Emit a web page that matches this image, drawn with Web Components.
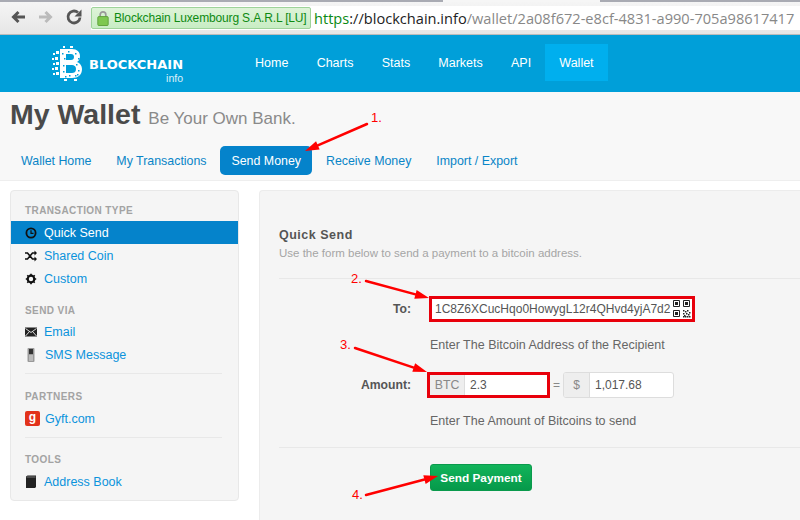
<!DOCTYPE html>
<html>
<head>
<meta charset="utf-8">
<title>My Wallet</title>
<style>
  html, body { margin: 0; padding: 0; }
  body { width: 800px; height: 520px; overflow: hidden; background: #fff; font-family: "Liberation Sans", Arial, sans-serif; position: relative; }
</style>
</head>
<body>
<browser-bar></browser-bar>
<site-nav></site-nav>
<wallet-header></wallet-header>
<wallet-body>
  <wallet-sidebar slot="side"></wallet-sidebar>
  <quick-send slot="main"></quick-send>
</wallet-body>
<arrow-notes></arrow-notes>

<script>
class BrowserBar extends HTMLElement {
  constructor() {
    super();
    this.attachShadow({ mode: 'open' });
    this.shadowRoot.innerHTML = `
      <style>
        :host { display: flex; align-items: flex-start; height: 35px; box-sizing: border-box; padding: 6px 0 0 8px; border-bottom: 1px solid #bbb;
          background: linear-gradient(90deg, #a9abb3 443px, #f6f6f6 443px, #f6f6f6 600px, #a9abb3 600px) 0 0 / 100% 2px no-repeat, linear-gradient(#f6f6f6, #e6e6e6); }
        .btn { width: 20px; height: 20px; margin: 1px 8px 0 0; flex: none; }
        .url { flex: 1; display: flex; align-items: center; height: 24px; margin-left: -1px; background: #fff; overflow: hidden; white-space: nowrap; }
        .ev { display: flex; align-items: center; height: 22px; flex: none; width: 220px; box-sizing: border-box; padding-left: 5px; background: linear-gradient(#def3d8, #c8edc4); border: 1px solid #9ed39a; border-radius: 2px; color: #0e8a12; font: 12px "Liberation Sans", sans-serif; letter-spacing: -.15px; }
        .ev svg { margin-right: 5px; flex: none; }
        .addr { font: 14.600px "Open Sans", sans-serif; color: #222; margin-left: 3px; }
        .addr b { font-weight: normal; color: #0b8a12; }
        .addr i { font-style: normal; color: #888; }
      </style>
      <svg class="btn" viewBox="0 0 20 20"><path d="M17 10H6M10.5 5 5.500 10l5 5" fill="none" stroke="#555" stroke-width="3"/></svg>
      <svg class="btn" viewBox="0 0 20 20"><path d="M3 10h11M9.500 5l5 5-5 5" fill="none" stroke="#bbb" stroke-width="3"/></svg>
      <svg class="btn" viewBox="0 0 20 20"><path d="M16 10.500a6 6 0 1 1-2-5" fill="none" stroke="#555" stroke-width="2.800"/><path d="M17.500 2.500v7h-7z" fill="#555"/></svg>
      <div class="url">
        <span class="ev">
          <svg width="12" height="16" viewBox="0 0 12 17"><path d="M3 8V5a3 3 0 0 1 6 0v3" fill="none" stroke="#999" stroke-width="1.800"/><rect x=".5" y="7" width="11" height="9.500" rx="1" fill="#7ec850" stroke="#5ea03a"/></svg>
          Blockchain Luxembourg S.A.R.L [LU]
        </span>
        <span class="addr"><b>https</b>://blockchain.info<i>/wallet/2a08f672-e8cf-4831-a990-705a98617417</i></span>
      </div>
    `;
  }
}

class SiteNav extends HTMLElement {
  constructor() {
    super();
    this.attachShadow({ mode: 'open' });
    // porous look of the logo: blue specks cut out of the B
    const specks = [[10,7],[16,5],[23,7],[12,12],[26,12],[11,19],[24,18],[11,25],[17,29],[26,24],[23,29],[13,30],[25,28]]
      .map(([x, y]) => `<rect x="${x}" y="${y}" width="1.500" height="1.500" fill="#009fd9"/>`).join('');
    this.shadowRoot.innerHTML = `
      <style>
        :host { display: flex; align-items: flex-start; height: 57px; background: #009fd9; color: #fff; font: 12.5px "Liberation Sans", sans-serif; }
        .logo { display: flex; align-items: center; width: 201px; padding: 9px 0 0 52px; flex: none; box-sizing: border-box; }
        .word { display: flex; flex-direction: column; align-items: flex-end; margin-left: 7px; margin-top: 14px; }
        .word b { font: bold 13px "DejaVu Sans", sans-serif; line-height: 13px; }
        .word span { font-size: 10.5px; line-height: 10px; opacity: .85; margin-top: 2px; }
        nav { display: flex; margin-top: 9px; margin-left: 40px; }
        a { display: block; height: 37px; line-height: 38px; padding: 0 14.100px; color: #fff; }
        a.on { background: #00afee; }
      </style>
      <div class="logo">
        <svg width="30" height="35" viewBox="0 0 30 35" fill="#fff">
          <path fill-rule="evenodd" d="M8 3h12c5 0 8 3 8 7 0 3-1 5-3 6 3 1 5 4 5 7 0 6-4 9-10 9H8zM14 8v6h5c2 0 3-1 3-3s-1-3-3-3zM14 19v8h6c2 0 4-1 4-4s-2-4-4-4z"/>
          ${specks}
          <rect x="1" y="7" width="2" height="2"/><rect x="4" y="5" width="3" height="3"/><rect x="0" y="12" width="2" height="2"/><rect x="3" y="11" width="3" height="3"/><rect x="1" y="17" width="2" height="2"/><rect x="4" y="16" width="3" height="3"/><rect x="0" y="22" width="2" height="2"/><rect x="3" y="21" width="3" height="3"/><rect x="1" y="27" width="2" height="2"/><rect x="4" y="26" width="3" height="3"/><rect x="11" y="0" width="2" height="2"/><rect x="18" y="0" width="3" height="2"/><rect x="12" y="33" width="3" height="2"/><rect x="22" y="33" width="3" height="2"/>
        </svg>
        <div class="word"><b>BLOCKCHAIN</b><span>info</span></div>
      </div>
      <nav>
        <a>Home</a><a>Charts</a><a>Stats</a><a>Markets</a><a>API</a><a class="on">Wallet</a>
      </nav>
    `;
  }
}

class WalletHeader extends HTMLElement {
  constructor() {
    super();
    this.attachShadow({ mode: 'open' });
    this.shadowRoot.innerHTML = `
      <style>
        :host { display: block; height: 89px; box-sizing: border-box; background: #f8f8f8; border-bottom: 1px solid #eee; padding: 6px 0 0 10px; }
        h1 { margin: 0; font: bold 28.500px/33px "Liberation Sans", sans-serif; color: #4a4a4a; }
        h1 small { font: 17px "Liberation Sans", sans-serif; color: #8a8a8a; }
        ul { display: flex; list-style: none; margin: 15px 0 0 0; padding: 0; font: 12.4px "Liberation Sans", sans-serif; color: #0a85c7; }
        li { height: 29px; line-height: 30px; padding: 0 11px; margin-right: 2.900px; border-radius: 5px; }
        li.on { background: #0583cb; color: #fff; }
      </style>
      <h1>My Wallet <small>Be Your Own Bank.</small></h1>
      <ul>
        <li>Wallet Home</li><li>My Transactions</li><li class="on">Send Money</li><li>Receive Money</li><li>Import / Export</li>
      </ul>
    `;
  }
}

class WalletBody extends HTMLElement {
  constructor() {
    super();
    this.attachShadow({ mode: 'open' });
    this.shadowRoot.innerHTML = `
      <style>
        :host { display: flex; align-items: flex-start; gap: 20px; padding: 9px 0 0 10px; }
      </style>
      <slot name="side"></slot>
      <slot name="main"></slot>
    `;
  }
}

class WalletSidebar extends HTMLElement {
  constructor() {
    super();
    this.attachShadow({ mode: 'open' });
    const clock = '<svg width="12" height="12" viewBox="0 0 12 12"><circle cx="6" cy="6" r="4.600" fill="none" stroke="#111" stroke-width="1.800"/><path d="M6 3.200V6.300H8.500" fill="none" stroke="#111" stroke-width="1.200"/></svg>';
    const shuffle = '<svg width="12" height="12" viewBox="0 0 12 12"><path d="M0 3h2.500l5 6H10M0 9h2.500l5-6H10" fill="none" stroke="#111" stroke-width="1.600"/><path d="M9.500 .5 12 3 9.500 5.500zM9.500 6.500 12 9 9.500 11.500z" fill="#111"/></svg>';
    const gear = '<svg width="12" height="12" viewBox="0 0 12 12"><circle cx="6" cy="6" r="3.300" fill="none" stroke="#111" stroke-width="2.200"/><path d="M6 .8v2M6 9.200v2M.8 6h2M9.200 6h2M2.300 2.300l1.400 1.400M8.300 8.300l1.400 1.400M2.300 9.700l1.400-1.400M8.300 3.700l1.400-1.400" stroke="#111" stroke-width="1.600"/></svg>';
    const mail = '<svg width="12" height="12" viewBox="0 0 12 12"><rect y="1.500" width="12" height="9" fill="#222"/><path d="M.5 2.500 6 6.500l5.500-4M.5 10 4.500 5.500M11.500 10 7.500 5.500" fill="none" stroke="#eee" stroke-width=".9"/></svg>';
    const phone = '<svg width="12" height="14" viewBox="0 0 12 14"><rect x="2.500" y="0" width="7" height="14" rx="1" fill="#999"/><rect x="4" y="1" width="4" height="5" fill="#333"/><path d="M4 8h4M4 10h4M4 12h4" stroke="#ddd"/></svg>';
    const gyft = '<span class="gy">g</span>';
    const book = '<svg width="12" height="13" viewBox="0 0 12 13"><path d="M1 1.500 2.500 .5H11v11.500l-1 1H1z" fill="#222"/><path d="M1.500 2H10.500" stroke="#777"/></svg>';
    this.shadowRoot.innerHTML = `
      <style>
        :host { display: block; flex: none; width: 229px; height: 311px; box-sizing: border-box; background: #f5f5f5; border: 1px solid #e8e8e8; border-radius: 4px; padding-top: 13px; font: 12.5px "Liberation Sans", sans-serif; }
        h4 { margin: 0; padding-left: 14px; font: bold 10px/14px "Liberation Sans", sans-serif; letter-spacing: .4px; color: #a3a3a3; }
        .it { display: flex; align-items: center; height: 23px; padding-left: 14px; color: #0b93dc; }
        .it .ic { width: 19px; flex: none; display: flex; align-items: center; }
        .it.on { background: #0583cb; color: #fff; }
        .first { margin-top: 3px; }
        hr { height: 1px; border: 0; background: #e8e8e8; margin: 7px 16px 16px 14px; }
        .gy { display: block; width: 15px; height: 15px; border-radius: 2px; background: #e2321b; color: #fff; text-align: center; font: bold 12px/13px "Liberation Sans", sans-serif; }
      </style>
      <h4>TRANSACTION TYPE</h4>
      <div class="it on first"><span class="ic">${clock}</span>Quick Send</div>
      <div class="it"><span class="ic">${shuffle}</span>Shared Coin</div>
      <div class="it"><span class="ic">${gear}</span>Custom</div>
      <h4 style="margin-top:14px;margin-bottom:3px">SEND VIA</h4>
      <div class="it" style="height:22px"><span class="ic">${mail}</span>Email</div>
      <div class="it"><span class="ic" style="width:20px">${phone}</span>SMS Message</div>
      <hr>
      <h4>PARTNERS</h4>
      <div class="it first"><span class="ic" style="width:20px">${gyft}</span>Gyft.com</div>
      <hr style="margin-top:7px;margin-bottom:15px">
      <h4>TOOLS</h4>
      <div class="it first"><span class="ic">${book}</span>Address Book</div>
    `;
  }
}

class QuickSend extends HTMLElement {
  constructor() {
    super();
    this.attachShadow({ mode: 'open' });
    // qr icon: three finder squares and a few data cells
    const finder = (x, y) => `<path d="M${x + .5} ${y + .5}h6v6h-6z" fill="#fff" stroke="#222"/><rect x="${x + 2}" y="${y + 2}" width="3" height="3"/>`;
    const data = [[10,10],[12,11],[14,10],[16,12],[10,13],[13,13],[15,14],[11,15],[14,16],[16,16],[10,16],[12,16]]
      .map(([x, y]) => `<rect x="${x}" y="${y}" width="1.500" height="1.500"/>`).join('');
    const qr = finder(0, 0) + finder(10, 0) + finder(0, 10) + data;
    this.shadowRoot.innerHTML = `
      <style>
        :host { display: block; flex: none; width: 541px; height: 340px; box-sizing: border-box; background: #f5f5f5; border: 1px solid #ececec; border-right: 0; border-radius: 4px 0 0 0; padding: 37px 0 0 19px; font: 12px "Liberation Sans", sans-serif; color: #666; }
        h3 { margin: 0; font: bold 12.500px/14px "Liberation Sans", sans-serif; letter-spacing: .5px; color: #555; }
        .sub { font-size: 11.500px; line-height: 14px; color: #a5a5a5; margin-top: 4px; }
        hr { height: 1px; border: 0; background: #e8e8e8; margin: 0; }
        .row { display: flex; align-items: center; }
        label { width: 132px; text-align: right; font: bold 12.200px "Liberation Sans", sans-serif; color: #555; margin-right: 18px; flex: none; }
        .box { display: flex; align-items: center; box-sizing: border-box; height: 26px; background: #fff; font-size: 12px; color: #555; flex: none; }
        .to { width: 266px; border: 3px solid #e8000b; padding-left: 3px; justify-content: space-between; white-space: nowrap; }
        .to svg { flex: none; margin-right: 1px; }
        .hint { margin-left: 151px; font-size: 12.500px; color: #666; }
        .addon { display: flex; align-items: center; justify-content: center; height: 100%; background: #eee; color: #888; border-right: 1px solid #ddd; box-sizing: border-box; }
        .btc { width: 123px; margin-left: -2px; border: 3px solid #e8000b; }
        .btc .addon { width: 35px; font-size: 12.300px; }
        .btc span:last-child, .usd span:last-child { padding-left: 5px; }
        .eq { color: #888; width: 13px; text-align: center; }
        .usd { width: 111px; border: 1px solid #ddd; border-radius: 3px; }
        .usd .addon { width: 26px; border-radius: 2px 0 0 2px; }
        .send { margin: 16px 0 0 151px; width: 102px; height: 27px; box-sizing: border-box; display: flex; align-items: center; justify-content: center; background: linear-gradient(#11b45a, #06994a); border: 1px solid #0a9a4c; border-radius: 3px; color: #fff; font-weight: bold; font-size: 11.800px; }
      </style>
      <h3>Quick Send</h3>
      <div class="sub">Use the form below to send a payment to a bitcoin address.</div>
      <hr style="margin-top:18px">
      <div class="row" style="margin-top:17px">
        <label>To:</label>
        <div class="box to"><span>1C8Z6XCucHqo0HowygL12r4QHvd4yjA7d2</span><svg width="18" height="18" viewBox="0 0 18 18" fill="#222">${qr}</svg></div>
      </div>
      <div class="hint" style="margin-top:16px">Enter The Bitcoin Address of the Recipient</div>
      <div class="row" style="margin-top:20px">
        <label>Amount:</label>
        <div class="box btc"><span class="addon">BTC</span><span>2.3</span></div>
        <span class="eq">=</span>
        <div class="box usd"><span class="addon">$</span><span>1,017.68</span></div>
      </div>
      <div class="hint" style="margin-top:16px">Enter The Amount of Bitcoins to send</div>
      <hr style="margin-top:19px">
      <div class="send">Send Payment</div>
    `;
  }
}

class ArrowNotes extends HTMLElement {
  constructor() {
    super();
    this.attachShadow({ mode: 'open' });
    const arrows = [
      [367, 124, 305, 151],
      [366, 281, 429, 298],
      [355, 348, 427, 372],
      [366, 495, 438, 476]
    ];
    const lines = arrows.map(([x1, y1, x2, y2]) => {
      const a = Math.atan2(y2 - y1, x2 - x1);
      const len = 14, w = 4.500;
      const bx = x2 - Math.cos(a) * len, by = y2 - Math.sin(a) * len;
      const nx = -Math.sin(a) * w, ny = Math.cos(a) * w;
      return `<line x1="${x1}" y1="${y1}" x2="${bx}" y2="${by}" stroke="#f00" stroke-width="2.500" stroke-linecap="round"/>` +
        `<polygon points="${x2},${y2} ${bx + nx},${by + ny} ${bx - nx},${by - ny}" fill="#f00"/>`;
    }).join('');
    this.shadowRoot.innerHTML = `
      <style>
        :host { position: absolute; left: 0; top: 0; width: 800px; height: 520px; pointer-events: none; }
        svg { position: absolute; left: 0; top: 0; }
        span { position: absolute; color: #f00; font: 13px "Liberation Sans", sans-serif; }
      </style>
      <svg width="800" height="520">${lines}</svg>
      <span style="left:371px;top:110px">1.</span>
      <span style="left:351px;top:271px">2.</span>
      <span style="left:340px;top:337px">3.</span>
      <span style="left:352px;top:487px">4.</span>
    `;
  }
}

customElements.define('browser-bar', BrowserBar);
customElements.define('site-nav', SiteNav);
customElements.define('wallet-header', WalletHeader);
customElements.define('wallet-body', WalletBody);
customElements.define('wallet-sidebar', WalletSidebar);
customElements.define('quick-send', QuickSend);
customElements.define('arrow-notes', ArrowNotes);
</script>
</body>
</html>
